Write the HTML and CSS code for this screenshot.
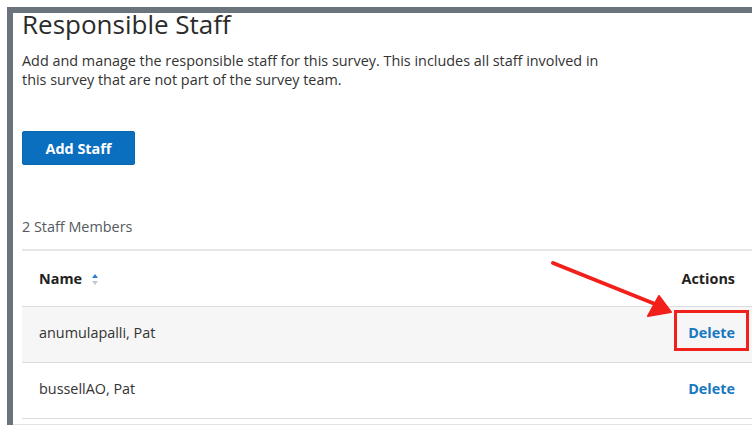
FILE: index.html
```html
<!DOCTYPE html>
<html lang="en">
<head>
<meta charset="utf-8">
<title>Responsible Staff</title>
<link rel="stylesheet" href="styles.css">
</head>
<body>
<div class="frame">
  <section class="panel">
    <h1 class="title">Responsible Staff</h1>
    <p class="intro">Add and manage the responsible staff for this survey. This includes all staff involved in this survey that are not part of the survey team.</p>
    <button class="btn-primary" type="button">Add Staff</button>
    <div class="count">2 Staff Members</div>
    <table class="staff-table">
      <thead>
        <tr>
          <th class="col-name">Name
            <svg class="sort-icon" width="6" height="11" viewBox="0 0 6 11">
              <path d="M3 0 L6 4 L0 4 Z" fill="#2f7fcc"/>
              <path d="M0 7 L6 7 L3 11 Z" fill="#c4c8cc"/>
            </svg>
          </th>
          <th class="col-actions">Actions</th>
        </tr>
      </thead>
      <tbody>
        <tr class="striped">
          <td>anumulapalli, Pat</td>
          <td class="col-actions"><a class="link-action highlighted" href="#">Delete</a></td>
        </tr>
        <tr>
          <td>bussellAO, Pat</td>
          <td class="col-actions"><a class="link-action" href="#">Delete</a></td>
        </tr>
      </tbody>
    </table>
    <div class="table-foot"></div>
  </section>
</div>
<svg class="callout-arrow" width="752" height="425" viewBox="0 0 752 425">
  <line x1="553" y1="263" x2="660" y2="306" stroke="#f2201b" stroke-width="4" stroke-linecap="round"/>
  <path d="M671 312 L648 316 L659 296 Z" fill="#f2201b" stroke="#f2201b" stroke-width="2" stroke-linejoin="round"/>
</svg>
</body>
</html>
```

FILE: styles.css
```css
html, body {
  margin: 0;
  padding: 0;
  background: #ffffff;
  overflow: hidden;
  width: 752px;
  height: 425px;
}

body {
  font-family: "Open Sans", "Liberation Sans", sans-serif;
  color: #333333;
  position: relative;
}

/* outer dialog frame, cut off on the right and bottom */
.frame {
  margin: 7px 0 0 7px;
  width: 745px;
  height: 418px;
  overflow: hidden;
  border-top: 6px solid #6b747c;
  border-left: 6px solid #6b747c;
  box-sizing: border-box;
}

.panel {
  padding-left: 9px;
}

.title {
  margin: -2px 0 0 0;
  font-size: 26px;
  font-weight: 400;
  line-height: 26px;
  color: #2b2b2b;
}

.intro {
  margin: 14px 0 0 0;
  width: 586px;
  font-size: 14.4px;
  line-height: 19px;
  color: #333333;
}

.btn-primary {
  display: block;
  margin-top: 42px;
  width: 113px;
  height: 34px;
  padding: 0;
  border: 1px solid #0b66b0;
  border-radius: 2px;
  background: #0a6fbf;
  color: #ffffff;
  font-family: inherit;
  font-size: 14.4px;
  font-weight: 700;
}

.count {
  margin-top: 52px;
  font-size: 14.4px;
  line-height: 20px;
  color: #555a60;
}

.staff-table {
  margin-top: 12px;
  width: 730px;
  border-collapse: collapse;
  border-top: 2px solid #e6e6e6;
  font-size: 14.4px;
}

.staff-table th,
.staff-table td {
  padding: 0 17px;
  height: 55px;
  text-align: left;
  border-bottom: 1px solid #dcdcdc;
}

.staff-table td {
  padding-bottom: 4px;
  height: 51px;
}

.staff-table th {
  font-weight: 700;
  color: #222222;
}

.sort-icon {
  margin-left: 6px;
  vertical-align: -1px;
}

.staff-table .col-actions {
  text-align: right;
}

.striped td {
  background: #f6f6f6;
}

.link-action {
  color: #1878c2;
  font-weight: 700;
  text-decoration: none;
}

.link-action.highlighted {
  position: relative;
}

/* red callout box around the first Delete link */
.link-action.highlighted::after {
  content: "";
  position: absolute;
  left: -14px;
  right: -14px;
  top: -13px;
  bottom: -9px;
  border: 3px solid #f2201b;
}

.table-foot {
  margin-top: 5px;
  margin-left: -9px;
  height: 1px;
  background: #e3e3e3;
}

.callout-arrow {
  position: absolute;
  left: 0;
  top: 0;
  pointer-events: none;
}
```
